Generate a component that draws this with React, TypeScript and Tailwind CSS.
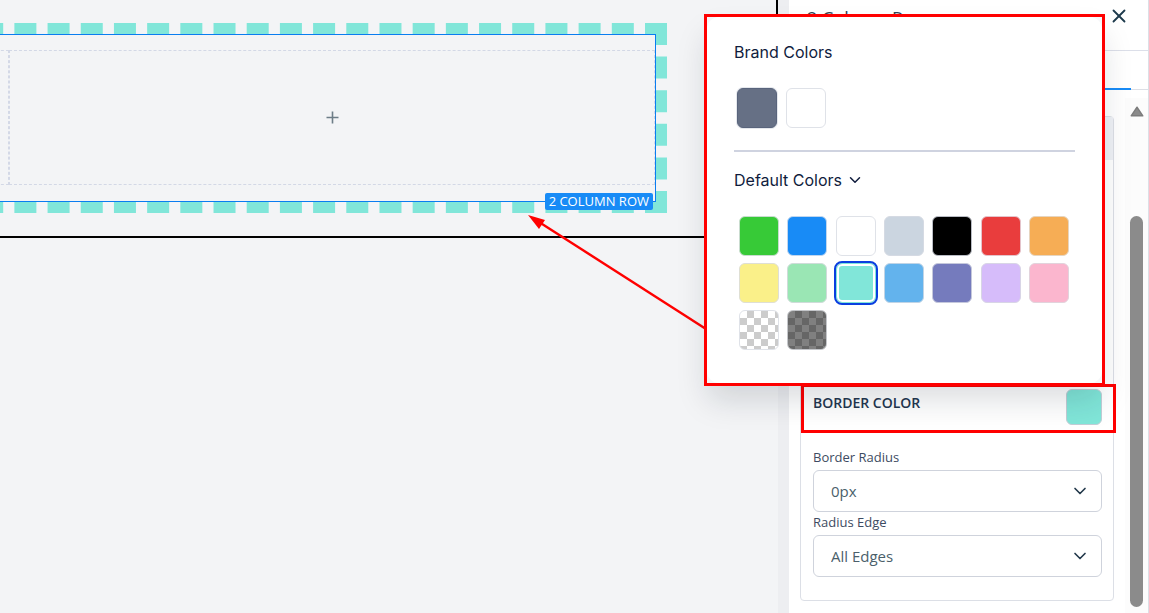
import { useState } from 'react';
import type { ReactNode } from 'react';
import { ChevronDown, X } from 'lucide-react';

type Swatch = {
  name: string;
  className: string;
};

const brandColors: Swatch[] = [
  { name: 'Slate', className: 'bg-[#667085] border-[#59647c] shadow-[0_0_0_1px_#e4e7ec]' },
  { name: 'White', className: 'bg-white border-[#dfe2e8]' },
];

const defaultColors: Swatch[] = [
  { name: 'Green', className: 'bg-[#37ca37] border-[#c9dccf]' },
  { name: 'Blue', className: 'bg-[#188bf6] border-[#c0d6ee]' },
  { name: 'White', className: 'bg-white border-[#dfe2e8]' },
  { name: 'Grey', className: 'bg-[#cbd5e0] border-[#d5dae3]' },
  { name: 'Black', className: 'bg-black border-[#b9bcc4]' },
  { name: 'Red', className: 'bg-[#e93d3d] border-[#e4c4cb]' },
  { name: 'Orange', className: 'bg-[#f6ad55] border-[#e6d5c0]' },
  { name: 'Yellow', className: 'bg-[#faf089] border-[#dfdfd4]' },
  { name: 'Light green', className: 'bg-[#9ae6b4] border-[#cfdcd9]' },
  { name: 'Teal', className: 'bg-[#81e6d9] border-[#81e6d9]' },
  { name: 'Sky', className: 'bg-[#63b3ed] border-[#c0d4e6]' },
  { name: 'Indigo', className: 'bg-[#757bbd] border-[#c5c8dc]' },
  { name: 'Lavender', className: 'bg-[#d6bcfa] border-[#d8d5e6]' },
  { name: 'Pink', className: 'bg-[#fbb6ce] border-[#e2d3dc]' },
  {
    name: 'Transparent',
    className:
      'border-[#dfe2e8] bg-[repeating-conic-gradient(#cccccc_0_25%,#ffffff_0_50%)] bg-size-[14px_14px]',
  },
  {
    name: 'Half transparent',
    className:
      'border-[#c4c6ca] bg-[repeating-conic-gradient(#666666_0_25%,#808080_0_50%)] bg-size-[14px_14px]',
  },
];

const ColorButton = ({
  swatch,
  selected = false,
  onClick,
}: {
  swatch: Swatch;
  selected?: boolean;
  onClick?: () => void;
}) => (
  <button
    type="button"
    aria-label={swatch.name}
    aria-pressed={selected}
    onClick={onClick}
    className={`size-10 rounded-md border ${swatch.className} ${
      selected ? 'outline-2 outline-[#0a3fe0] ring-2 ring-white ring-inset' : ''
    }`}
  />
);

const SelectField = ({ id, label, children }: { id: string; label: string; children: ReactNode }) => (
  <div>
    <label htmlFor={id} className="block h-[23px] text-[13px] leading-5 font-medium text-[#3d4b62]">
      {label}
    </label>
    <div className="relative">
      <select
        id={id}
        className="h-[42px] w-full appearance-none rounded-md border border-[#cfd3dc] bg-white px-[17px] text-[15px] text-[#4b5f6b]"
      >
        {children}
      </select>
      <ChevronDown
        className="pointer-events-none absolute top-[11px] right-3 size-5 text-[#22384a]"
        strokeWidth={2}
      />
    </div>
  </div>
);

const Canvas = () => (
  <main className="min-w-0 flex-1 overflow-hidden">
    <section className="border-r-2 border-b-2 border-black pt-[23px] pr-[109px] pb-[23px]">
      <div className="relative -ml-[52px] border-[11px] border-dashed border-[#81e6d9]">
        <div className="flex border border-[#0a7df0] pt-[15px] pb-4">
          <div className="h-[135px] w-[49px] border border-dashed border-[#d3d8e6]" />
          <div className="flex h-[135px] flex-1 items-center justify-center border border-dashed border-[#d3d8e6]">
            <button type="button" aria-label="Add element">
              <svg viewBox="0 0 13 13" className="size-[13px] stroke-[#6d7d87]" strokeWidth="1.6">
                <path d="M6.5 .5v12M.5 6.5h12" />
              </svg>
            </button>
          </div>
        </div>
        <span className="absolute right-[3px] -bottom-2 h-[17px] rounded-xs bg-[#188bf6] px-1 text-[13px] leading-[17px] text-white">
          2 COLUMN ROW
        </span>
      </div>
    </section>
  </main>
);

const Sidebar = () => (
  <aside className="flex w-[360px] shrink-0 flex-col border-r border-[#dcdfe6] bg-white">
    <header className="flex h-[51px] items-start justify-between border-b border-[#dcdfe9] pr-[18px] pl-[18px]">
      <h2 className="pt-[5px] text-lg leading-[26px] font-medium text-[#2f4454]">2 Column Row</h2>
      <button type="button" aria-label="Close" className="pt-[5px]">
        <X className="size-[22px] text-[#1d3a4c]" strokeWidth={2} />
      </button>
    </header>
    <div className="flex h-[39px] border-b border-[#dcdfe6] pr-[17px]">
      <div className="-mb-px flex-1 border-b-2 border-[#188bf6]" />
    </div>

    <div className="flex flex-1">
      <div className="flex-1 pt-[26px] pr-[11px] pb-3 pl-[11px]">
        <div className="rounded-sm border border-[#dcdfe6]">
          <div className="h-[43px] bg-[#eff1f6]" />
          <div className="h-[224px]" />
          <div className="-mr-[3px] flex h-[49px] items-start justify-between border-[3px] border-[#ff0000] pr-[11px] pl-[9px]">
            <h3 className="pt-[6px] text-sm leading-5 font-semibold text-[#24364f]">BORDER COLOR</h3>
            <button
              type="button"
              aria-label="Border color"
              className="mt-[2px] size-9 rounded-md border border-[#c3cdd6] bg-[#81e6d9]"
            />
          </div>
          <div className="pt-[14px] pr-[11px] pb-[23px] pl-3">
            <SelectField id="radius" label="Border Radius">
              <option>0px</option>
              <option>5px</option>
              <option>10px</option>
            </SelectField>
            <SelectField id="edge" label="Radius Edge">
              <option>All Edges</option>
              <option>Top Only</option>
              <option>Bottom Only</option>
            </SelectField>
          </div>
        </div>
      </div>
      {/* scroll track */}
      <div className="mt-2 flex w-[23px] flex-col items-center bg-[#fcfcfc] pb-[6px]">
        <svg viewBox="0 0 14 11" className="mt-2 h-[11px] w-[14px]">
          <path
            d="M7 1.2 12.8 9.8H1.2Z"
            fill="#8b8b8b"
            stroke="#7c7c7c"
            strokeWidth="1.4"
            strokeLinejoin="round"
          />
        </svg>
        <div className="mt-[99px] w-[13px] flex-1 rounded-full bg-[#8b8b8b]" />
      </div>
    </div>
  </aside>
);

const ColorPicker = () => {
  const [selected, setSelected] = useState('Teal');

  return (
    <div className="absolute top-[14px] right-11 w-[401px] border-[3px] border-[#ff0000] bg-[#f6f7f9] font-['Inter',sans-serif] shadow-[0_18px_30px_-4px_rgba(16,24,40,0.15)]">
      <div className="rounded-xl bg-white px-[27px] pt-[23px] pb-[33px] text-[#101c3d]">
        <h4 className="text-base">Brand Colors</h4>
        <div className="mt-6 flex gap-[9px] pl-[3px]">
          {brandColors.map((swatch) => (
            <ColorButton key={swatch.name} swatch={swatch} />
          ))}
        </div>
        <hr className="mt-[22px] border-t-2 border-[#cfd3e0]" />
        <button type="button" className="mt-4 flex items-center gap-1 text-base">
          Default Colors
          <ChevronDown className="size-[18px]" strokeWidth={2} />
        </button>
        <div className="mt-6 grid grid-cols-[repeat(7,40px)] justify-between gap-y-[7px] pr-[6px] pl-[5px]">
          {defaultColors.map((swatch) => (
            <ColorButton
              key={swatch.name}
              swatch={swatch}
              selected={swatch.name === selected}
              onClick={() => setSelected(swatch.name)}
            />
          ))}
        </div>
      </div>
    </div>
  );
};

const App = () => {
  return (
    <div className="relative flex min-h-screen overflow-hidden bg-[#f3f4f6] font-['Open_Sans','Noto_Sans',sans-serif]">
      <Canvas />
      <div className="w-[11px] shrink-0 bg-[#edeef1]" />
      <Sidebar />
      {/* arrow from the picker to the row border */}
      <svg viewBox="0 0 180 116" className="pointer-events-none absolute top-[214px] right-[442px] h-[116px] w-[180px]">
        <path d="M12 8 179 115" stroke="#ff0000" strokeWidth="2.4" />
        <path d="M1 1 18 6 12 15Z" fill="#ff0000" />
      </svg>
      <ColorPicker />
    </div>
  );
};

export default App;
